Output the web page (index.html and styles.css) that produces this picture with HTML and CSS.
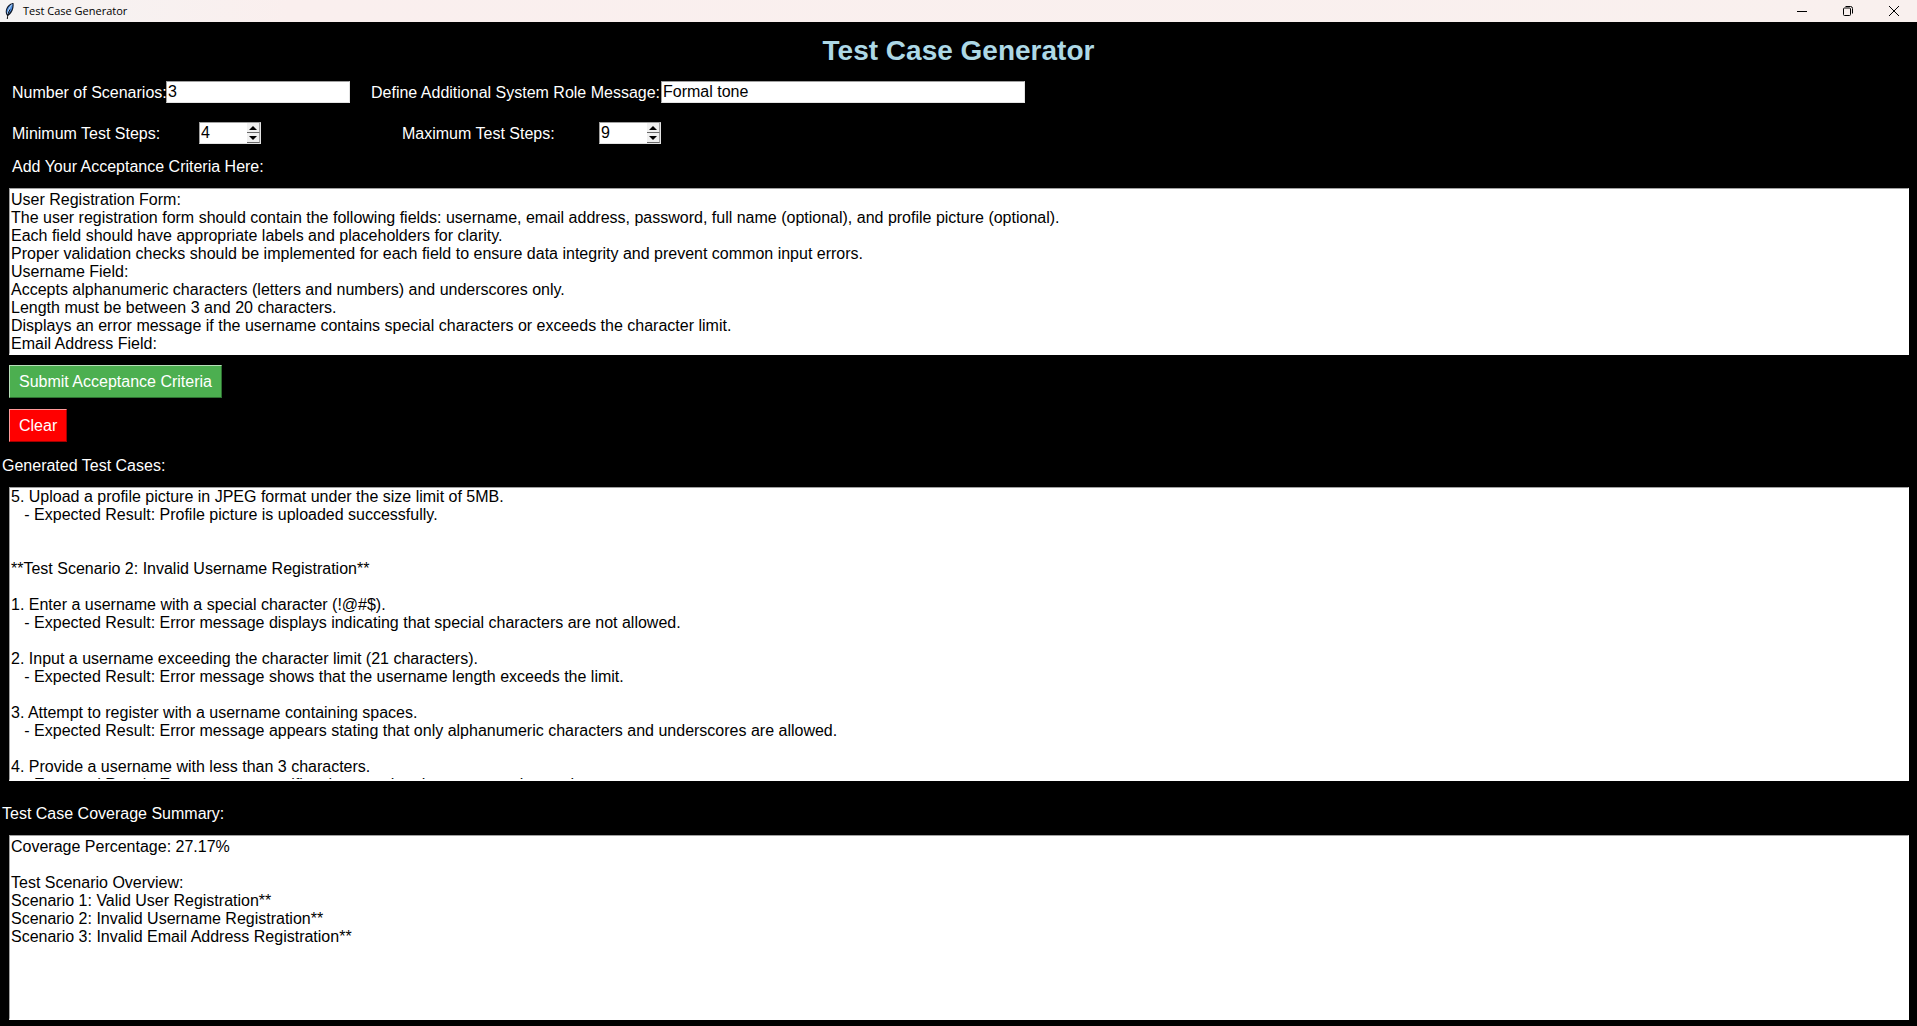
FILE: index.html
```html
<!DOCTYPE html>
<html lang="en">
<head>
<meta charset="utf-8">
<title>Test Case Generator</title>
<link rel="stylesheet" href="styles.css">
</head>
<body>
<header class="titlebar">
  <svg class="feather" width="12" height="18" viewBox="0 0 12 18" aria-hidden="true">
    <path d="M3 13.500C.500 10 2 5 5.500 2.500 7 1.500 8 1 9.500 1c.5 3 0 6.500-2 9.500-1.200 1.800-2.500 2.800-4 3.500z" fill="#101828"/>
    <path d="M3 11.500c-1-3 .5-6 3-8C7 2.600 7.800 2.200 8.500 2c.3 2.800-.5 5.500-2 7.500C5.500 11 4.500 12 3.500 12.500z" fill="#4f8fe0"/>
    <path d="M7.800 2.500C5.500 5.500 4.200 8.500 3.500 12" stroke="#c3dcf8" stroke-width="1" fill="none"/>
    <path d="M6 7.500C4.500 10 3.500 13 3.300 17" stroke="#101010" stroke-width="1" fill="none"/>
  </svg>
  <span class="titlebar-text">Test Case Generator</span>
  <div class="window-controls">
    <button class="window-button" type="button" aria-label="Minimize">
      <svg width="10" height="10" viewBox="0 0 10 10"><path d="M0 5.500h10" stroke="#000" fill="none"/></svg>
    </button>
    <button class="window-button" type="button" aria-label="Restore">
      <svg width="10" height="10" viewBox="0 0 10 10" fill="none" stroke="#000"><rect x=".5" y="2" width="7" height="7.500" rx="1"/><path d="M2.500.5H7.500a2 2 0 0 1 2 2V7.500"/></svg>
    </button>
    <button class="window-button" type="button" aria-label="Close">
      <svg width="10" height="10" viewBox="0 0 10 10"><path d="M0 0l10 10M10 0L0 10" stroke="#000" fill="none"/></svg>
    </button>
  </div>
</header>

<main class="app">
  <h1 class="heading">Test Case Generator</h1>

  <form class="criteria-form">
    <div class="row">
      <label class="label-scenarios" for="scenarios">Number of Scenarios:</label>
      <input class="entry entry-short" id="scenarios" type="text" value="3">
      <label class="label-role" for="role">Define Additional System Role Message:</label>
      <input class="entry entry-long" id="role" type="text" value="Formal tone">
    </div>

    <div class="row row-steps">
      <label class="label-min" for="min-steps">Minimum Test Steps:</label>
      <div class="spinbox">
        <input class="spin-value" id="min-steps" type="number" value="4">
        <div class="spin-buttons">
          <button class="spin-button" type="button" aria-label="Increase minimum"><svg width="8" height="4" viewBox="0 0 8 4"><path d="M0 4L4 0 8 4z"/></svg></button>
          <button class="spin-button" type="button" aria-label="Decrease minimum"><svg width="8" height="4" viewBox="0 0 8 4"><path d="M0 0L4 4 8 0z"/></svg></button>
        </div>
      </div>
      <label class="label-max" for="max-steps">Maximum Test Steps:</label>
      <div class="spinbox">
        <input class="spin-value" id="max-steps" type="number" value="9">
        <div class="spin-buttons">
          <button class="spin-button" type="button" aria-label="Increase maximum"><svg width="8" height="4" viewBox="0 0 8 4"><path d="M0 4L4 0 8 4z"/></svg></button>
          <button class="spin-button" type="button" aria-label="Decrease maximum"><svg width="8" height="4" viewBox="0 0 8 4"><path d="M0 0L4 4 8 0z"/></svg></button>
        </div>
      </div>
    </div>

    <label class="label-criteria" for="criteria">Add Your Acceptance Criteria Here:</label>
    <textarea class="text" id="criteria" rows="9">User Registration Form:
The user registration form should contain the following fields: username, email address, password, full name (optional), and profile picture (optional).
Each field should have appropriate labels and placeholders for clarity.
Proper validation checks should be implemented for each field to ensure data integrity and prevent common input errors.
Username Field:
Accepts alphanumeric characters (letters and numbers) and underscores only.
Length must be between 3 and 20 characters.
Displays an error message if the username contains special characters or exceeds the character limit.
Email Address Field:</textarea>

    <div class="actions">
      <button class="button button-submit" type="button">Submit Acceptance Criteria</button>
      <button class="button button-clear" type="button">Clear</button>
    </div>
  </form>

  <label class="label-output" for="cases">Generated Test Cases:</label>
  <textarea class="text text-scrolled" id="cases" rows="16">5. Upload a profile picture in JPEG format under the size limit of 5MB.
   - Expected Result: Profile picture is uploaded successfully.


**Test Scenario 2: Invalid Username Registration**

1. Enter a username with a special character (!@#$).
   - Expected Result: Error message displays indicating that special characters are not allowed.

2. Input a username exceeding the character limit (21 characters).
   - Expected Result: Error message shows that the username length exceeds the limit.

3. Attempt to register with a username containing spaces.
   - Expected Result: Error message appears stating that only alphanumeric characters and underscores are allowed.

4. Provide a username with less than 3 characters.
   - Expected Result: Error message notifies the user that the username is too short.</textarea>

  <label class="label-output label-summary" for="summary">Test Case Coverage Summary:</label>
  <textarea class="text" id="summary" rows="10">Coverage Percentage: 27.17%

Test Scenario Overview:
Scenario 1: Valid User Registration**
Scenario 2: Invalid Username Registration**
Scenario 3: Invalid Email Address Registration**</textarea>
</main>
</body>
</html>
```
FILE: styles.css
```css
* {
  box-sizing: border-box;
}

body {
  margin: 0;
  min-height: 100vh;
  background: #000;
  color: #fff;
  font: 16px/18px "Liberation Sans", Arial, sans-serif;
}

input,
textarea,
button {
  margin: 0;
  font: inherit;
  border-radius: 0;
}

.titlebar {
  display: flex;
  align-items: center;
  height: 22px;
  padding-left: 4px;
  background: linear-gradient(90deg, #f5f3f3, #faefee 15%, #f9f0ee);
  color: #000;
}

.feather {
  margin-right: 7px;
}

.titlebar-text {
  font: 11px/22px "Open Sans", "Segoe UI", sans-serif;
}

.window-controls {
  display: flex;
  margin-left: auto;
}

.window-button {
  display: flex;
  align-items: center;
  justify-content: center;
  width: 46px;
  height: 18px;
  padding: 0;
  border: 0;
  background: none;
}

.heading {
  margin: 0;
  padding: 13px 0 14px;
  color: #add8e6;
  font-size: 28px;
  line-height: 32px;
  text-align: center;
}

.row {
  display: flex;
  align-items: center;
  padding-left: 12px;
  white-space: nowrap;
}

.row label {
  padding-top: 2px;
}

.row-steps {
  margin-top: 19px;
}

.label-scenarios {
  width: 154px;
}

.label-role {
  width: 290px;
  margin-left: 21px;
}

.label-min {
  width: 187px;
}

.label-max {
  width: 197px;
  margin-left: 141px;
}

.entry {
  height: 22px;
  padding: 0 1px;
  border: 1px solid;
  border-color: #a0a0a0 #e3e3e3 #e3e3e3 #a0a0a0;
  background: #fff;
  color: #000;
}

.entry-short {
  width: 184px;
}

.entry-long {
  width: 364px;
}

.spinbox {
  display: flex;
  width: 62px;
  height: 22px;
  border: 1px solid;
  border-color: #a0a0a0 #e3e3e3 #e3e3e3 #a0a0a0;
  background: #fff;
}

.spin-value {
  flex: 1;
  min-width: 0;
  padding: 0 1px;
  border: 0;
  background: #fff;
  color: #000;
  appearance: textfield;
}

.spin-value::-webkit-inner-spin-button {
  display: none;
}

.spin-buttons {
  display: grid;
  grid-template-rows: 1fr 1fr;
  width: 13px;
}

.spin-button {
  display: flex;
  align-items: center;
  justify-content: center;
  padding: 0;
  border: 0;
  border-right: 1px solid #a0a0a0;
  border-bottom: 1px solid #696969;
  background: #f0f0f0;
}

.label-criteria {
  display: block;
  padding: 14px 12px 12px;
}

.text {
  display: block;
  box-sizing: content-box;
  width: calc(100% - 21px);
  margin: 0 8px 0 9px;
  padding: 2px 1px 0;
  border: solid;
  border-width: 1px 1px 2px;
  border-color: #a0a0a0 #fff #fff #a0a0a0;
  background: #fff;
  color: #000;
  resize: none;
  overflow: hidden;
}

.text-scrolled {
  padding: 0 1px 3px;
}

.actions {
  display: flex;
  flex-direction: column;
  align-items: flex-start;
  gap: 11px;
  padding: 10px 9px 15px;
}

.button {
  height: 33px;
  padding: 1px 9px 0;
  border: 1px solid;
  color: #fff;
}

.button-submit {
  border-color: #b8e0ba #2e7031 #2e7031 #b8e0ba;
  background: #4caf50;
}

.button-clear {
  border-color: #ff9a9a #a00000 #a00000 #ff9a9a;
  background: #f00;
}

.label-output {
  display: block;
  padding: 0 2px 12px;
}

.label-summary {
  padding-top: 24px;
}
```
